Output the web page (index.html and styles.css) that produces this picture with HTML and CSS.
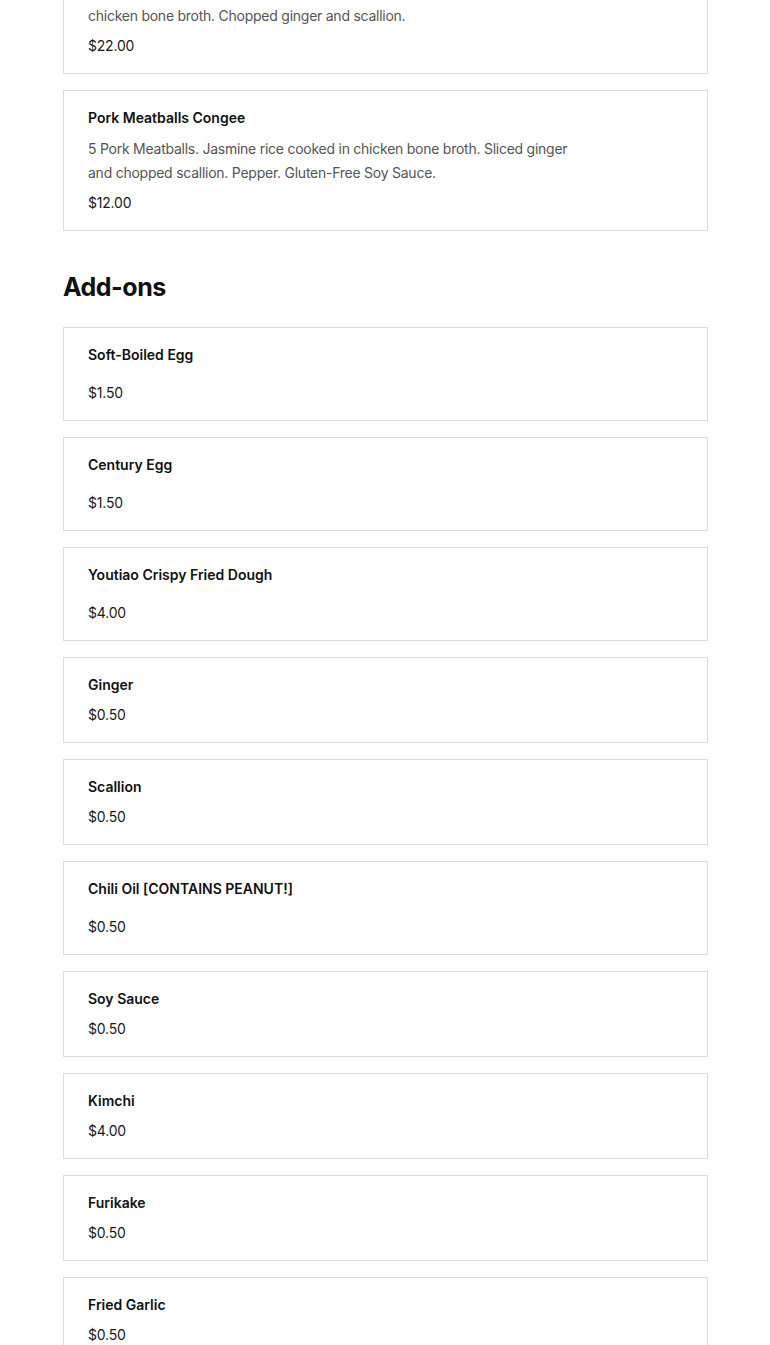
FILE: index.html
```html
<!DOCTYPE html>
<html lang="en">
<head>
<meta charset="utf-8">
<title>Menu</title>
<link rel="stylesheet" href="styles.css">
</head>
<body>
<main class="menu">
  <section class="group">
    <article class="item">
      <h3 class="name">Chicken Congee</h3>
      <p class="desc">Shredded chicken. Jasmine rice cooked in chicken broth and<br>chicken bone broth. Chopped ginger and scallion.</p>
      <p class="price">$22.00</p>
    </article>
    <article class="item">
      <h3 class="name">Pork Meatballs Congee</h3>
      <p class="desc">5 Pork Meatballs. Jasmine rice cooked in chicken bone broth. Sliced ginger and chopped scallion. Pepper. Gluten-Free Soy Sauce.</p>
      <p class="price">$12.00</p>
    </article>
  </section>

  <section class="group">
    <h2 class="group-title">Add-ons</h2>
    <article class="item">
      <h3 class="name">Soft-Boiled Egg</h3>
      <p class="desc empty"></p>
      <p class="price">$1.50</p>
    </article>
    <article class="item">
      <h3 class="name">Century Egg</h3>
      <p class="desc empty"></p>
      <p class="price">$1.50</p>
    </article>
    <article class="item">
      <h3 class="name">Youtiao Crispy Fried Dough</h3>
      <p class="desc empty"></p>
      <p class="price">$4.00</p>
    </article>
    <article class="item">
      <h3 class="name">Ginger</h3>
      <p class="price">$0.50</p>
    </article>
    <article class="item">
      <h3 class="name">Scallion</h3>
      <p class="price">$0.50</p>
    </article>
    <article class="item">
      <h3 class="name">Chili Oil [CONTAINS PEANUT!]</h3>
      <p class="desc empty"></p>
      <p class="price">$0.50</p>
    </article>
    <article class="item">
      <h3 class="name">Soy Sauce</h3>
      <p class="price">$0.50</p>
    </article>
    <article class="item">
      <h3 class="name">Kimchi</h3>
      <p class="price">$4.00</p>
    </article>
    <article class="item">
      <h3 class="name">Furikake</h3>
      <p class="price">$0.50</p>
    </article>
    <article class="item">
      <h3 class="name">Fried Garlic</h3>
      <p class="price">$0.50</p>
    </article>
  </section>
</main>
</body>
</html>
```

FILE: styles.css
```css
html, body {
  margin: 0;
  padding: 0;
  background: #ffffff;
}

body {
  font-family: Inter, "Liberation Sans", Arial, sans-serif;
  color: #1a1a1a;
  -webkit-font-smoothing: antialiased;
}

.menu {
  width: 645px;
  margin: -67px 0 0 63px;
  display: flex;
  flex-direction: column;
  gap: 40px;
}

.group {
  display: flex;
  flex-direction: column;
  gap: 16px;
}

.group-title {
  margin: 0 0 8px;
  font-size: 25px;
  line-height: 32px;
  font-weight: 700;
  letter-spacing: -0.5px;
  color: #111111;
}

.item {
  border: 1px solid #dcdcdc;
  padding: 17px 24px;
  display: flex;
  flex-direction: column;
}

.name {
  margin: 0;
  font-size: 14px;
  line-height: 20px;
  font-weight: 600;
  color: #111111;
}

.desc {
  margin: 9px 0 0;
  max-width: 490px;
  font-size: 14px;
  line-height: 24px;
  font-weight: 400;
  letter-spacing: -0.25px;
  color: #555555;
}

.desc.empty {
  margin-top: 10px;
}

.price {
  margin: 8px 0 0;
  font-size: 14px;
  line-height: 20px;
  font-weight: 400;
  letter-spacing: -0.2px;
  color: #1a1a1a;
}

.name + .price {
  margin-top: 10px;
}
```
